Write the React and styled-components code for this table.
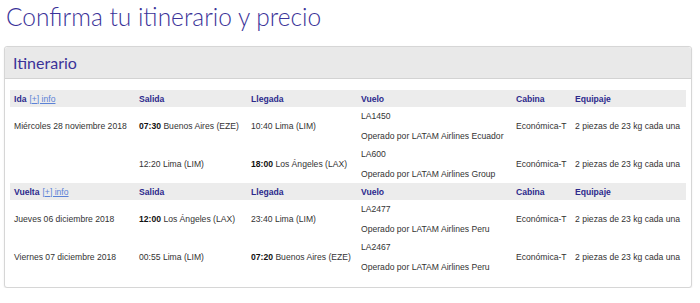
import React from 'react'
import styled, { createGlobalStyle } from 'styled-components'

const Global = createGlobalStyle`
  body {
    margin: 0;
    background: #fff;
    font-family: "Liberation Sans", Arial, sans-serif;
  }
`

const Page = styled.div`
  padding: 0 8px 0 4px;
`

const Title = styled.h1`
  margin: 0;
  padding: 2px 0 0 2px;
  font-family: Lato, "Open Sans", sans-serif;
  font-weight: 300;
  font-size: 24.5px;
  line-height: 30px;
  color: #3b3399;
`

const Panel = styled.div`
  margin-top: 14px;
  border: 1px solid #d6d6d6;
  border-radius: 3px;
  box-shadow: 0 1px 2px rgba(0, 0, 0, 0.08);
  background: #fff;
  padding-bottom: 11px;
`

const PanelHead = styled.div`
  height: 31px;
  display: flex;
  align-items: center;
  padding-left: 8px;
  background: #e9e9e9;
  border-bottom: 1px solid #d3d3d3;
  border-radius: 3px 3px 0 0;
  font-family: Lato, "Open Sans", sans-serif;
  font-size: 16px;
  color: #3b3399;
`

const Body = styled.div`
  padding: 11px 5px 0 5px;
`

const Table = styled.table`
  width: 100%;
  border-collapse: collapse;
  table-layout: fixed;
  font-size: 8.6px;
  color: #333;
`

const HeadRow = styled.tr`
  background: #ececec;
  height: 17px;
`

const Th = styled.th`
  text-align: left;
  font-weight: bold;
  color: #2d2a8c;
  padding: 0 0 0 4px;
  width: ${p => p.$w ? p.$w + 'px' : 'auto'};
`

const InfoLink = styled.a`
  color: #5b82d6;
  text-decoration: underline;
  font-weight: normal;
  margin-left: 3px;
`

const Row = styled.tr`
  height: 38px;
`

const Td = styled.td`
  padding: 0 0 0 4px;
  vertical-align: middle;
  white-space: nowrap;
`

const Flight = styled.div`
  display: flex;
  flex-direction: column;
  gap: 9px;
  line-height: 11px;
`

const Time = styled.b`
  color: #111;
`

const sections = [
  {
    label: 'Ida',
    rows: [
      { date: 'Miércoles 28 noviembre 2018', dep: ['07:30', 'Buenos Aires (EZE)'], arr: [null, '10:40 Lima (LIM)'], num: 'LA1450', op: 'Operado por LATAM Airlines Ecuador' },
      { date: '', dep: [null, '12:20 Lima (LIM)'], arr: ['18:00', 'Los Ángeles (LAX)'], num: 'LA600', op: 'Operado por LATAM Airlines Group' },
    ],
  },
  {
    label: 'Vuelta',
    rows: [
      { date: 'Jueves 06 diciembre 2018', dep: ['12:00', 'Los Ángeles (LAX)'], arr: [null, '23:40 Lima (LIM)'], num: 'LA2477', op: 'Operado por LATAM Airlines Peru' },
      { date: 'Viernes 07 diciembre 2018', dep: [null, '00:55 Lima (LIM)'], arr: ['07:20', 'Buenos Aires (EZE)'], num: 'LA2467', op: 'Operado por LATAM Airlines Peru' },
    ],
  },
]

const Place = ({ v }) => v[0] ? <><Time>{v[0]}</Time> {v[1]}</> : v[1]

export default function App() {
  return (
    <Page>
      <Global />
      <Title>Confirma tu itinerario y precio</Title>
      <Panel>
        <PanelHead>Itinerario</PanelHead>
        <Body>
          <Table>
            <tbody>
              {sections.map(s => (
                <React.Fragment key={s.label}>
                  <HeadRow>
                    <Th $w={121}>{s.label}<InfoLink href="#">[+] info</InfoLink></Th>
                    <Th $w={108}>Salida</Th>
                    <Th $w={106}>Llegada</Th>
                    <Th $w={151}>Vuelo</Th>
                    <Th $w={55}>Cabina</Th>
                    <Th>Equipaje</Th>
                  </HeadRow>
                  {s.rows.map(r => (
                    <Row key={r.num}>
                      <Td>{r.date}</Td>
                      <Td><Place v={r.dep} /></Td>
                      <Td><Place v={r.arr} /></Td>
                      <Td>
                        <Flight>
                          <span>{r.num}</span>
                          <span>{r.op}</span>
                        </Flight>
                      </Td>
                      <Td>Económica-T</Td>
                      <Td>2 piezas de 23 kg cada una</Td>
                    </Row>
                  ))}
                </React.Fragment>
              ))}
            </tbody>
          </Table>
        </Body>
      </Panel>
    </Page>
  )
}
